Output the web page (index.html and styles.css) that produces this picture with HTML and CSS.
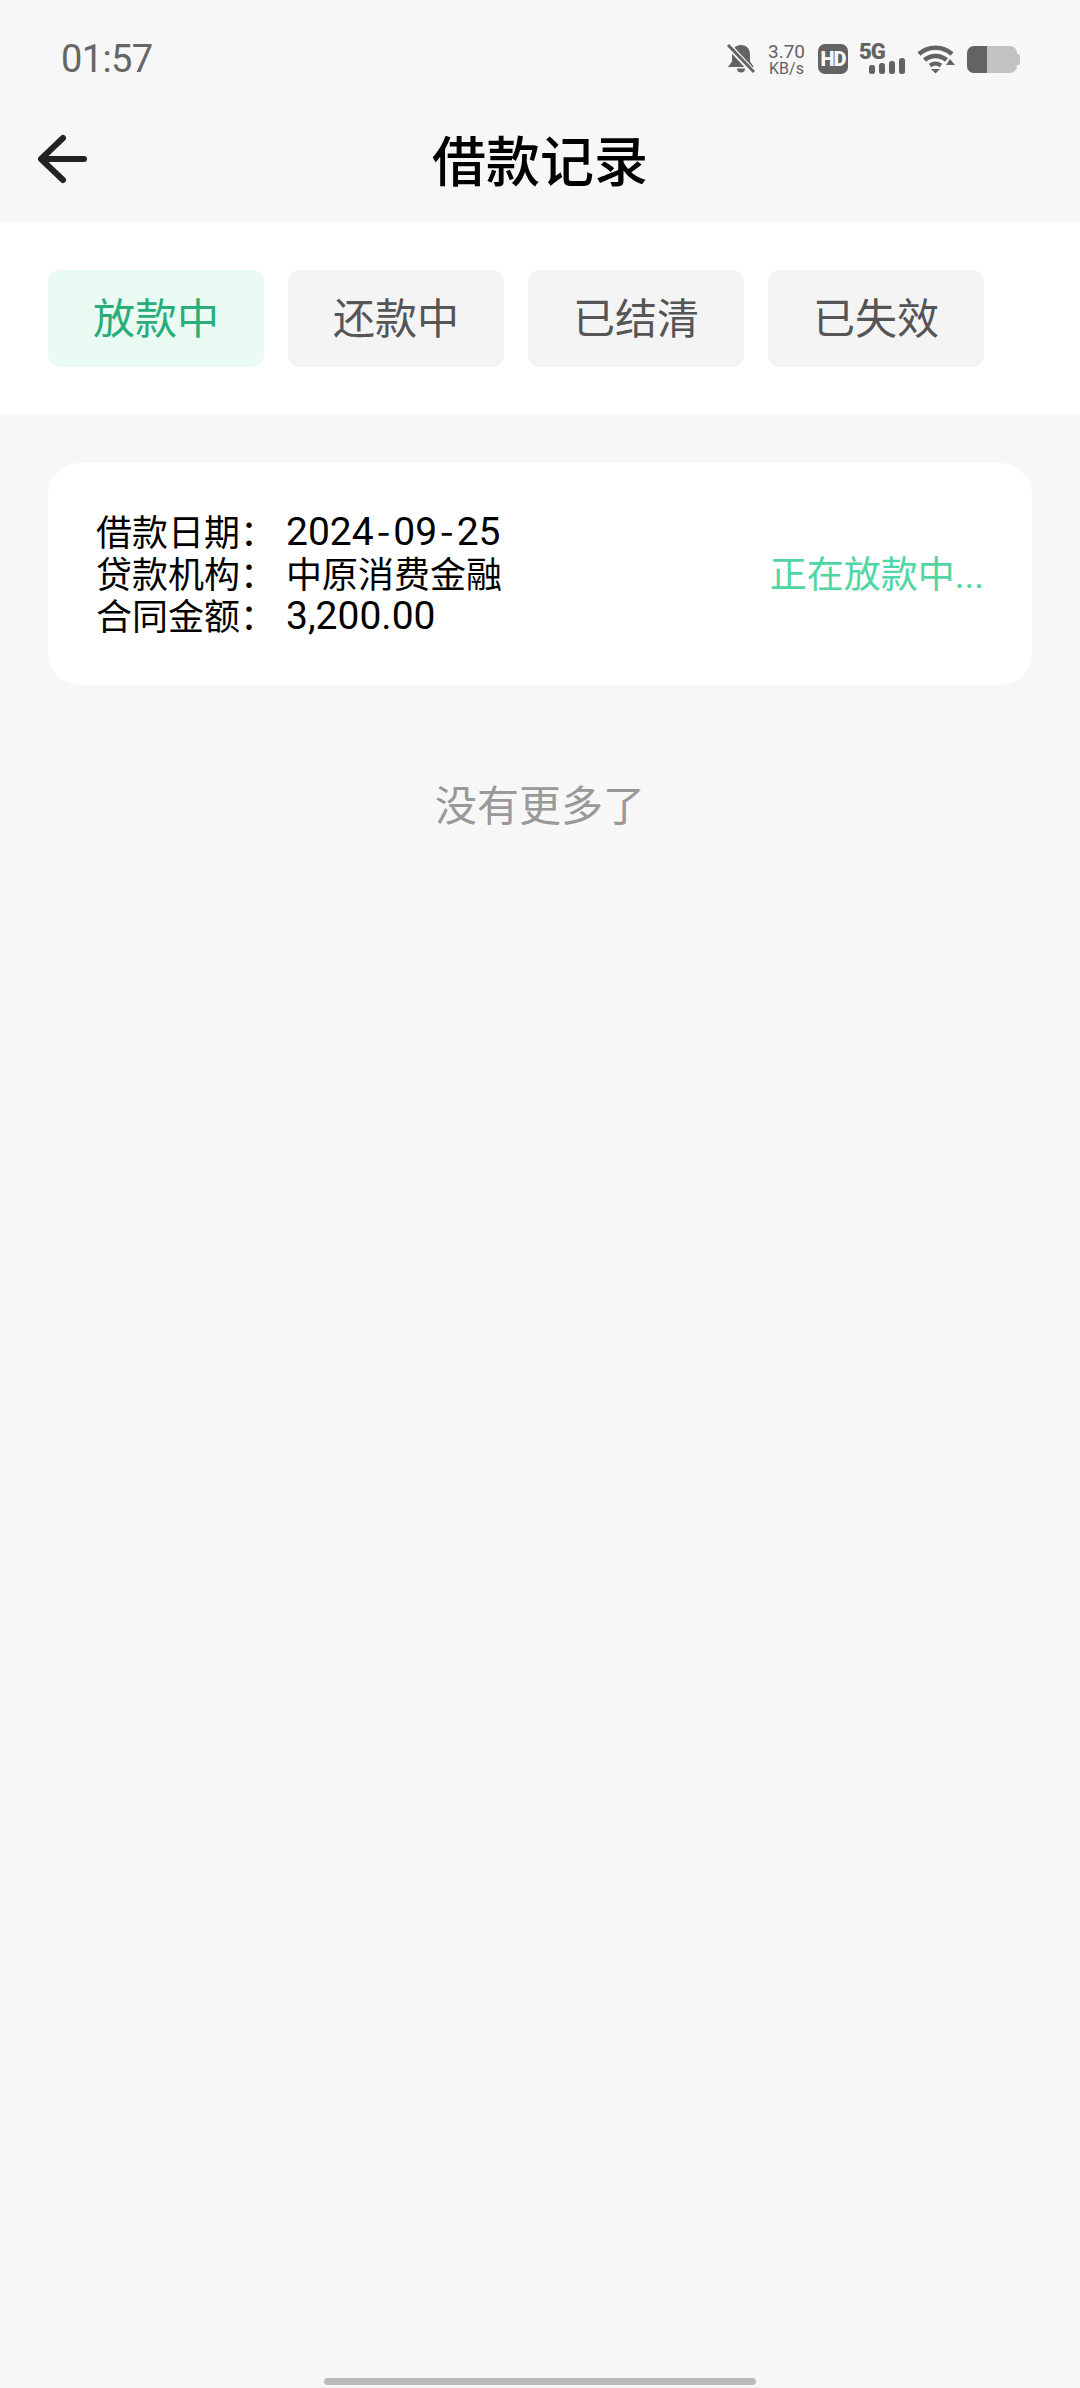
FILE: index.html

```html
<!DOCTYPE html>
<html lang="zh-CN">
<head>
    <meta charset="UTF-8">
    <meta name="viewport" content="width=device-width, initial-scale=1.0">
    <title>借款记录</title>
    <link rel="stylesheet" href="styles.css">
</head>
<body>
<div id="statusbar">
    <span id="clock">01:57</span>
    <span id="status_icons">
        <svg class="icon_bell" width="28" height="30" viewBox="0 0 28 30">
            <path d="M14 1c5.500 0 9 4 9 9.500v7l4 5.500H1l4-5.500v-7C5 5 8.500 1 14 1z" fill="#636363"/>
            <path d="M10 24.500h8a4 4 0 0 1-8 0z" fill="#636363"/>
            <path d="M1 1l26 28" stroke="#f7f7f7" stroke-width="6"/>
            <path d="M1 1l26 27" stroke="#636363" stroke-width="3"/>
        </svg>
        <span class="netspeed">
            <span class="netspeed_value">3.70</span>
            <span class="netspeed_unit">KB/s</span>
        </span>
        <span class="hd_badge">HD</span>
        <span class="signal">
            <span class="signal_type">5G</span>
            <svg width="36" height="17" viewBox="0 0 36 17">
                <rect x="0" y="7" width="6" height="9" rx="2.500" fill="#636363"/>
                <rect x="10" y="5" width="6" height="11" rx="2.500" fill="#636363"/>
                <rect x="20" y="3" width="6" height="13" rx="2.500" fill="#636363"/>
                <rect x="30" y="0" width="6" height="16" rx="2.500" fill="#636363"/>
            </svg>
        </span>
        <svg class="icon_wifi" width="38" height="30" viewBox="0 0 38 30">
            <path d="M2 10c9-8.500 24-8.500 33 0" fill="none" stroke="#636363" stroke-width="4.500"/>
            <path d="M7.500 16c6-5.500 16-5.500 22 0" fill="none" stroke="#636363" stroke-width="4.500"/>
            <path d="M13 21.500c3.500-2.500 7.500-2.500 11 0" fill="none" stroke="#636363" stroke-width="4"/>
            <path d="M14 25h9l-4.500 4.500z" fill="#636363"/>
            <path d="M33 15l5 6h-9z" fill="#636363"/>
        </svg>
        <span class="battery">
            <span class="battery_level"></span>
        </span>
    </span>
</div>

<div id="navbar">
    <a class="nav_back">
        <svg width="52" height="52" viewBox="0 0 52 52">
            <path d="M26 5L4 26l22 21M5 26h42" fill="none" stroke="#222" stroke-width="6" stroke-linecap="round" stroke-linejoin="round"/>
        </svg>
    </a>
    <h1 class="nav_title">借款记录</h1>
</div>

<div id="tabs">
    <a class="tab selected">放款中</a>
    <a class="tab">还款中</a>
    <a class="tab">已结清</a>
    <a class="tab">已失效</a>
</div>

<div id="main">
    <div class="loan_card">
        <div class="loan_info">
            <span>借款日期：</span><span class="loan_num">2024<span class="dash">-</span>09<span class="dash">-</span>25</span>
            <span>贷款机构：</span><span>中原消费金融</span>
            <span>合同金额：</span><span class="loan_num">3,200.00</span>
        </div>
        <span class="loan_status">正在放款中...</span>
    </div>
    <p class="no_more">没有更多了</p>
</div>

<div id="homebar"></div>
</body>
</html>
```

FILE: styles.css

```css
body {
    display: flex;
    flex-direction: column;
    min-height: 2388px;
    margin: 0;
    background-color: #f7f7f7;
    font-family: Roboto, "Noto Sans CJK SC", sans-serif;
}

#statusbar {
    display: flex;
    align-items: center;
    justify-content: space-between;
    height: 118px;
    padding-left: 61px;
    padding-right: 60px;
}

#clock {
    font-size: 38px;
    letter-spacing: -0.6px;
    color: #666;
}

#status_icons {
    display: flex;
    align-items: center;
}

.netspeed {
    display: flex;
    flex-direction: column;
    align-items: center;
    margin-left: 13px;
    color: #636363;
}

.netspeed_value {
    font-size: 19px;
    line-height: 18px;
}

.netspeed_unit {
    font-size: 16px;
    line-height: 15px;
}

.hd_badge {
    display: flex;
    align-items: center;
    justify-content: center;
    width: 30px;
    height: 30px;
    margin-left: 13px;
    border-radius: 7px;
    background-color: #636363;
    color: #f7f7f7;
    font-size: 20px;
    font-weight: 900;
    letter-spacing: -1px;
}

.signal {
    display: flex;
    flex-direction: column;
    align-items: flex-start;
    margin-left: 11px;
    height: 30px;
    position: relative;
    width: 46px;
}

.signal_type {
    font-size: 22px;
    line-height: 16px;
    font-weight: 900;
    color: #636363;
    letter-spacing: -1px;
}

.signal svg {
    position: absolute;
    left: 10px;
    bottom: -1px;
}

.icon_wifi {
    margin-left: 12px;
}

.battery {
    display: flex;
    width: 50px;
    height: 27px;
    margin-left: 12px;
    border-radius: 7px;
    overflow: hidden;
    background-color: #c2c2c2;
}

.battery_level {
    width: 20px;
    background-color: #636363;
}

#status_icons::after {
    content: "";
    width: 3px;
    height: 11px;
    border-radius: 0 2px 2px 0;
    background-color: #c2c2c2;
}

#navbar {
    display: flex;
    align-items: center;
    justify-content: center;
    position: relative;
    height: 86px;
    margin-bottom: 18px;
}

.nav_back {
    position: absolute;
    left: 37px;
    top: 15px;
    display: flex;
}

.nav_title {
    margin: 0 0 6px;
    font-size: 54px;
    font-weight: 500;
    color: #000;
}

#tabs {
    display: flex;
    gap: 24px;
    padding: 48px;
    background-color: #fff;
}

.tab {
    display: flex;
    align-items: center;
    justify-content: center;
    width: 216px;
    height: 97px;
    padding-bottom: 6px;
    box-sizing: border-box;
    border-radius: 12px;
    background-color: #f4f4f4;
    color: #555;
    font-size: 42px;
}

.tab.selected {
    background-color: #eafbf4;
    color: #2aad78;
}

#main {
    padding: 48px 48px 0;
}

.loan_card {
    display: flex;
    align-items: center;
    justify-content: space-between;
    padding: 48px;
    border-radius: 32px;
    background-color: #fff;
}

.loan_info {
    display: grid;
    grid-template-columns: 190px auto;
    grid-auto-rows: 42px;
    margin-top: 2px;
    margin-bottom: -2px;
    font-size: 36px;
    line-height: 42px;
    color: #000;
}

.loan_num {
    margin-top: -2px;
    font-size: 39px;
}

.dash {
    padding: 0 3px;
    line-height: 0;
    font-family: "Noto Sans CJK SC", sans-serif;
}

.loan_status {
    padding-bottom: 5px;
    font-size: 37px;
    color: #50d6a2;
}

.no_more {
    margin: 94px 0 0;
    text-align: center;
    font-size: 42px;
    line-height: 56px;
    color: #999;
}

#homebar {
    width: 432px;
    height: 7px;
    margin: auto auto 3px;
    border-radius: 4px;
    background-color: #bbb;
}
```
